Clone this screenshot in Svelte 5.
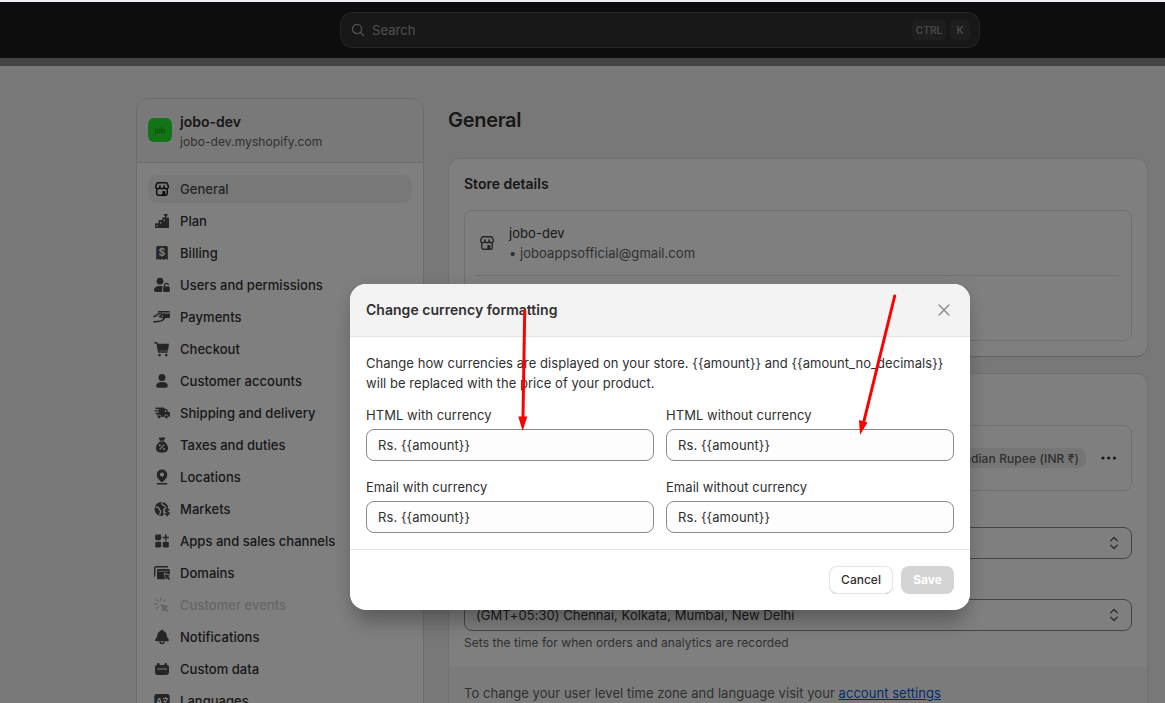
<script>
  const storeIcon = '<path d="M6 3.700h8c.5 0 .9.200 1.100.7l1.100 2.500c.5 1.500-.4 2.900-1.900 2.900-1.200 0-2.100-.8-2.200-1.900-.1 1.100-1 1.900-2.100 1.900s-2-.8-2.100-1.900c-.1 1.100-1 1.900-2.200 1.900-1.500 0-2.400-1.400-1.900-2.900l1.100-2.500c.2-.5.6-.7 1.100-.7z" fill="none" stroke="currentColor" stroke-width="1.400" stroke-linejoin="round"/><path d="M7.900 6.500v1.500M12.100 6.500v1.500" stroke="currentColor" stroke-width="1.200" stroke-linecap="round"/><path d="M4.750 9.500v5.300c0 .9.500 1.450 1.400 1.450h7.700c.9 0 1.400-.550 1.400-1.450V9.500" fill="none" stroke="currentColor" stroke-width="1.400"/><path d="M10.300 16.200v-3.100c0-.6.400-1 1-1h1c.6 0 1 .4 1 1v3.100z"/>';

  const navItems = [
    { label: 'General', active: true, icon: storeIcon },
    { label: 'Plan', icon: '<path d="M3 13.200c0-.6.4-1 1-1h2.600V10c0-.6.4-1 1-1h2.600V7.500c0-.6.4-1 1-1H13V5.300l-1.200-1V3h3.800v1.300l-1.200 1v1.200H16c.6 0 1 .4 1 1V16c0 .6-.4 1-1 1H4c-.6 0-1-.4-1-1z"/><path d="M4.900 14v1.300M8.600 11v1.600M12.200 8.400V10" stroke="#fff" stroke-width="1.200"/>' },
    { label: 'Billing', icon: '<path d="M4.200 4.500C4.200 3.700 4.900 3 5.700 3h8.600c.8 0 1.500.7 1.500 1.500V17l-2-1.300-1.900 1.300-1.900-1.300L8.100 17l-1.900-1.300-2 1.300z"/><text x="10" y="13.200" font-size="10.500" font-weight="600" fill="#fff" text-anchor="middle">$</text>' },
    { label: 'Users and permissions', icon: '<circle cx="8" cy="6.200" r="3.400"/><path d="M2 15c0-2.600 2.700-4 6-4 1.200 0 2.200.1 3 .5-.6.6-.8 1.500-.8 2.500v3H4c-1.200 0-2-.9-2-2z"/><path d="M12.600 12V10.400a1.900 1.900 0 0 1 3.800-.2" fill="none" stroke="currentColor" stroke-width="1.300"/><rect x="11.200" y="11.600" width="6.600" height="5.400" rx="1.200"/>' },
    { label: 'Payments', icon: '<path d="M7 4h9.500c.8 0 1.500.6 1.500 1.400H5.600C5.800 4.600 6.300 4 7 4zM10 6.600h8v2.800c0 1-.7 1.700-1.600 1.700h-5.200z"/><path d="M2 9.500c2-.5 3-1.800 4.400-2.600 1.600-.8 3.400-.5 3.600.4.200 1-1.400 1.200-2.500 2 1.700 1 4 1 4.200 2.400M2 15c2.500-1.500 5 .5 8-1.500 1.100-.7 2.600-1.500 2.600-2.500" fill="none" stroke="currentColor" stroke-width="1.500" stroke-linecap="round"/>' },
    { label: 'Checkout', icon: '<path d="M2.800 3.800h1.500c.6 0 .9.400 1 .9l1.400 8.300h8.500" fill="none" stroke="currentColor" stroke-width="1.500" stroke-linecap="round"/><path d="M5 4.800h12l-.8 5.800c-.1.700-.6 1.200-1.400 1.200H6.200z"/><circle cx="7.600" cy="16.100" r="1.300"/><circle cx="14.200" cy="16.100" r="1.300"/>' },
    { label: 'Customer accounts', icon: '<circle cx="10" cy="6.500" r="3.500"/><path d="M4.200 14.800c0-2.500 2.700-3.700 5.800-3.700s5.800 1.200 5.800 3.700c0 1.300-.8 1.900-1.900 1.900H6.100c-1.100 0-1.900-.6-1.900-1.900z"/>' },
    { label: 'Shipping and delivery', icon: '<path d="M3.500 4.600h7.700c.8 0 1.200.4 1.200 1.200h1.300c.8 0 1.300.3 1.600 1l.7 1.700 1.200.6c.5.300.8.700.8 1.300V13c0 .7-.4 1.100-1.100 1.100H5V11H3.600V9.800h3.200V8.500H2.500V7.300h4.300V6H3.500z"/><circle cx="7.200" cy="13.800" r="1.900" stroke="#fff" stroke-width=".8"/><circle cx="14.300" cy="13.800" r="1.900" stroke="#fff" stroke-width=".8"/><path d="M13 7.200h1l.6 1.700H13z" fill="#fff"/>' },
    { label: 'Taxes and duties', icon: '<path d="M7.500 2.500h5c.6 0 .8.500.5 1L12 5.700H8L7 3.500c-.3-.5 0-1 .5-1zM7.900 6.500h4.200c2.300 1.700 4 4.200 4 6.800 0 2.500-1.700 4.100-4.100 4.100H8c-2.400 0-4.100-1.600-4.100-4.100 0-2.600 1.700-5.100 4-6.800z"/><path d="m7.700 14.300 4.600-4.600" stroke="#fff" stroke-width="1.200"/><circle cx="7.900" cy="10.300" r="1" fill="#fff"/><circle cx="12.100" cy="13.900" r="1" fill="#fff"/>' },
    { label: 'Locations', icon: '<path fill-rule="evenodd" d="M10 2.500a5.200 5.200 0 0 0-5.300 5.200c0 3.200 2.900 5.500 4.400 7.100.5.500 1.300.5 1.800 0 1.500-1.600 4.400-3.900 4.400-7.100A5.200 5.200 0 0 0 10 2.500zm0 7.200a2.100 2.100 0 1 1 0-4.200 2.100 2.100 0 0 1 0 4.200z"/><path d="M5.300 16.700h9.400" stroke="currentColor" stroke-width="1.400" stroke-linecap="round"/>' },
    { label: 'Markets', icon: '<circle cx="9.500" cy="10" r="7"/><path d="M3.600 7.800c2 .1 3.600 1 3.600 2.300 0 1.200 1.600 1.300 1.400 2.600-.1.900-.9 1.500-.9 3.500M10.500 3.400c-1.300 1.200-.6 2.400.8 2.700 1.400.2 1.100 1.700 2.600 1.700" fill="none" stroke="#fff" stroke-width="1.300"/><path d="M11.100 10.500c.6-1.400 2-2 3.200-1.900h3.700v9.500h-6.500z" fill="#fff"/><path d="M17 10.900c-.8-1.100-3.700-1-3.700.5 0 1.600 3.900 1.100 3.900 2.900 0 1.600-3.100 1.700-4.100.3M15.200 8.900v8" fill="none" stroke="currentColor" stroke-width="1.400" stroke-linecap="round"/>' },
    { label: 'Apps and sales channels', icon: '<rect x="3.200" y="3.400" width="6" height="5.800" rx="1.400"/><rect x="3.200" y="10.800" width="6" height="5.800" rx="1.400"/><rect x="10.800" y="10.800" width="6" height="5.800" rx="1.400"/><path d="M13.800 4v5M11.300 6.500h5" stroke="currentColor" stroke-width="1.500" stroke-linecap="round"/>' },
    { label: 'Domains', icon: '<path d="M2.700 13V5c0-.8.5-1.300 1.300-1.300h11.500" fill="none" stroke="currentColor" stroke-width="1.400" stroke-linecap="round"/><path d="M5 7.200C5 6.400 5.500 6 6.300 6h10.200c.8 0 1.300.5 1.300 1.200v4.300l-6.100-1.800 1.500 6.500H6.300c-.8 0-1.300-.5-1.300-1.300z"/><path d="M6.300 8.300h10" stroke="#fff" stroke-width=".6"/><path d="m12.800 10.900 5.500 1.900-2 1 1.800 2.200-1.100 1-2-2-1 1.800z"/>' },
    { label: 'Customer events', disabled: true, icon: '<path d="M9 2.800v2.500M4.500 4.700l1.700 1.700M2.600 9.200h2.500M4.500 13.700l1.700-1.700M13.500 4.700l-1.700 1.700" stroke="currentColor" stroke-width="1.300" stroke-linecap="round"/><path d="m8.300 8.500 8.500 3-3.100 1.600 2.900 3-1.200 1.200-3-2.900-1.400 2.900z"/>' },
    { label: 'Notifications', icon: '<path d="M10 2.700c.8 0 1.300.5 1.400 1.200 2.100.6 3.100 2.200 3.200 4.400.1 2 1.900 2.900 2.200 4.600.1.700-.4 1.300-1.200 1.300H4.400c-.8 0-1.300-.6-1.200-1.300.3-1.700 2.100-2.600 2.200-4.600.1-2.200 1.100-3.800 3.200-4.400.1-.7.6-1.200 1.400-1.200z"/><path d="M8 14.500a2 2 0 0 0 4 0" fill="none" stroke="currentColor" stroke-width="1.500"/>' },
    { label: 'Custom data', icon: '<path d="M5 6V5.300C5 4.500 5.500 4 6.300 4s1.300.5 1.300 1.300V6h4.800v-.7c0-.8.5-1.300 1.300-1.300S15 4.500 15 5.300V6c1.200 0 2 .8 2 2v1.500H3V8c0-1.200.8-2 2-2zM3 10.600h14V13c0 1.900-1 3-2.700 3H5.700C4 16 3 14.900 3 13z"/><path d="M3 9h2v3H3zM15 9h2v3h-2z"/>' },
    { label: 'Languages', icon: '<rect x="2.300" y="3" width="15.400" height="14" rx="2.500"/><text x="3.800" y="13.600" font-size="9.500" font-weight="600" fill="#fff">A</text><path d="M11 7.500h5M13.500 6v1.500M15.200 7.700c-.6 2.600-2 4.500-4 5.600M11.800 9c.8 1.900 2 3.400 3.900 4.300" fill="none" stroke="#fff" stroke-width="1.100"/>' },
  ];

  let fields = $state([
    { label: 'HTML with currency', value: 'Rs. {{amount}}' },
    { label: 'HTML without currency', value: 'Rs. {{amount}}' },
    { label: 'Email with currency', value: 'Rs. {{amount}}' },
    { label: 'Email without currency', value: 'Rs. {{amount}}' },
  ]);
</script>

{#snippet selectIcon()}
  <svg class="select-icon" viewBox="0 0 20 20"><path d="m6.700 7.700 3.300-3.200 3.300 3.200M6.700 12.300l3.300 3.200 3.300-3.200" fill="none" stroke="currentColor" stroke-width="1.500" stroke-linecap="round" stroke-linejoin="round" /></svg>
{/snippet}

<div class="app">
  <div class="screen">
    <header class="topbar">
      <div class="search">
        <svg class="search-icon" viewBox="0 0 16 16"><circle cx="7" cy="7" r="4.600" fill="none" stroke="currentColor" stroke-width="1.300" /><path d="m10.500 10.500 3 3" stroke="currentColor" stroke-width="1.400" stroke-linecap="round" /></svg>
        <span class="search-label">Search</span>
        <kbd>CTRL</kbd>
        <kbd>K</kbd>
      </div>
    </header>

    <div class="page">
      <aside class="sidebar">
        <div class="store">
          <span class="avatar">job</span>
          <div>
            <div class="store-name">jobo-dev</div>
            <div class="store-url">jobo-dev.myshopify.com</div>
          </div>
        </div>
        <nav>
          {#each navItems as item}
            <div class="nav-item" class:active={item.active} class:disabled={item.disabled}>
              <svg class="icon" viewBox="0 0 20 20" fill="currentColor">{@html item.icon}</svg>
              <span>{item.label}</span>
            </div>
          {/each}
        </nav>
      </aside>

      <main>
        <h1>General</h1>

        <section class="card details">
          <h2>Store details</h2>
          <div class="box">
            <div class="contact">
              <svg class="icon" viewBox="0 0 20 20" fill="currentColor">{@html storeIcon}</svg>
              <div>
                <div>jobo-dev</div>
                <div class="muted">• joboappsofficial@gmail.com</div>
              </div>
            </div>
          </div>
        </section>

        <section class="card defaults">
          <h2>Store defaults</h2>
          <div class="box currency">
            <span class="badge">Indian Rupee (INR ₹)</span>
            <svg class="icon" viewBox="0 0 20 20" fill="currentColor"><circle cx="4" cy="10" r="1.600" /><circle cx="9.700" cy="10" r="1.600" /><circle cx="15.400" cy="10" r="1.600" /></svg>
          </div>
          <div class="select-row">
            <span>Unit system</span>
            <div class="select">{@render selectIcon()}</div>
          </div>
          <div class="select-row">
            <span>Time zone</span>
            <div class="select">(GMT+05:30) Chennai, Kolkata, Mumbai, New Delhi{@render selectIcon()}</div>
          </div>
          <p class="help">Sets the time for when orders and analytics are recorded</p>
          <div class="card-footer">To change your user level time zone and language visit your <a href="#account">account settings</a></div>
        </section>
      </main>
    </div>
    <div class="backdrop"></div>
  </div>

  <div class="modal" role="dialog" aria-label="Change currency formatting">
    <div class="modal-header">
      <h2>Change currency formatting</h2>
      <svg class="close" viewBox="0 0 20 20"><path d="m5.100 5.100 9.800 9.800M14.900 5.100l-9.800 9.800" stroke="currentColor" stroke-width="1.400" stroke-linecap="round" /></svg>
    </div>
    <div class="modal-body">
      <p>Change how currencies are displayed on your store. {'{{amount}}'} and {'{{amount_no_decimals}}'} will be replaced with the price of your product.</p>
      <div class="fields">
        {#each fields as field}
          <label>
            <span>{field.label}</span>
            <input type="text" bind:value={field.value} />
          </label>
        {/each}
      </div>
    </div>
    <div class="modal-footer">
      <button class="cancel">Cancel</button>
      <button class="save" disabled>Save</button>
    </div>
  </div>

  <svg class="arrows" viewBox="0 0 1165 703">
    <path d="M524.700 311 523 418M894.700 296 863.500 423" stroke="#f00" stroke-width="3" stroke-linecap="round" />
    <path d="M518.300 416.500h9L522.600 431zM859 420l8.500 2.500L860 435z" fill="#f00" />
  </svg>
</div>

<style>
  :global(body) { margin: 0; overflow: hidden; }
  .app { position: relative; height: 703px; overflow: hidden; box-sizing: border-box; border-top: 2px solid #eef0f6; font: 400 13px/20px Inter, "Liberation Sans", sans-serif; letter-spacing: 0.045px; color: #303030; }
  .app :global(*) { box-sizing: border-box; }
  h1, h2, p { margin: 0; }
  .screen { height: 701px; overflow: hidden; position: relative; background: #f1f1f1; }
  .backdrop { position: absolute; inset: 0; background: rgba(0, 0, 0, 0.5); }
  .icon { width: 20px; height: 20px; flex: none; }

  .topbar { display: flex; padding: 10px 0 10px 340px; height: 64px; background: #1a1a1a; border-bottom: 8px solid #888; }
  .search { display: flex; align-items: center; width: 640px; height: 36px; padding: 0 9px; background: #303030; border: 1px solid #484848; border-radius: 12px; color: #a0a0a0; }
  .search-icon { width: 16px; height: 16px; margin-right: 6px; }
  .search-label { flex: 1; }
  kbd { margin-left: 4px; height: 20px; width: 20px; text-align: center; border-radius: 5px; background: #3d3d3d; font: 600 10px/21px Inter, sans-serif; color: #929292; }
  kbd:first-of-type { width: 34px; }

  .page { display: flex; gap: 24px; padding: 32px 17px 0 136px; }
  .sidebar { width: 288px; height: 700px; flex: none; background: #fff; border: 1px solid #d8d8d8; border-radius: 12px 12px 0 0; overflow: hidden; }
  .store { display: flex; align-items: center; gap: 8px; height: 64px; padding: 0 11px; background: #f3f3f3; border-bottom: 1px solid #dcdcdc; }
  .store-name { padding-top: 4px; font-size: 14px; line-height: 18px; font-weight: 600; letter-spacing: 0; }
  .store-url { padding-top: 1px; font-size: 12px; color: #616161; letter-spacing: 0.08px; }
  .avatar { width: 24px; height: 24px; margin-top: -2px; border-radius: 6px; background: #25e82b; color: #147d17; font-size: 7px; line-height: 25px; text-align: center; }
  nav { display: flex; flex-direction: column; gap: 4px; padding: 12px 11px; }
  .nav-item { display: flex; align-items: center; gap: 8px; height: 28px; padding: 0 4px; border-radius: 8px; font-weight: 500; letter-spacing: 0.035px; }
  .nav-item .icon { color: #4a4a4a; }
  .nav-item.active { background: #f1f1f1; color: #4a4a4a; }
  .nav-item.active .icon { color: #1a1a1a; }
  .nav-item.disabled, .nav-item.disabled .icon { color: #cccccc; }

  main { width: 700px; flex: none; }
  h1 { height: 60px; padding-top: 10px; font-size: 20px; line-height: 24px; font-weight: 600; letter-spacing: -0.3px; }
  h2 { font-size: 14px; line-height: 20px; font-weight: 600; letter-spacing: 0; }
  .card { background: #fff; border: 1px solid #e0e0e0; border-bottom-color: #c8c8c8; border-radius: 12px; padding: 15px; overflow: hidden; }
  .details { height: 199px; margin-bottom: 16px; }
  .box { border: 1px solid #dedede; border-radius: 8px; margin-top: 16px; }
  .details .box { height: 131px; padding: 0 12px 0 11px; }
  .contact { display: flex; align-items: center; gap: 12px; height: 65px; border-bottom: 1px solid #dedede; }
  .contact .icon { margin-left: 1px; color: #4a4a4a; }
  .muted { color: #616161; }
  .defaults { height: 360px; }
  .currency { display: flex; align-items: center; justify-content: flex-end; gap: 13px; height: 66px; padding-right: 12px; }
  .badge { height: 20px; padding: 0 7px 0 8px; border-radius: 8px; background: #ededed; color: #616161; font-size: 12px; line-height: 21px; font-weight: 500; letter-spacing: 0.1px; }
  .select-row { margin-top: 12px; }
  .select-row + .select-row { margin-top: 16px; }
  .select-row span { display: block; margin-bottom: 4px; }
  .select { position: relative; height: 32px; padding: 5px 11px; border: 1px solid #8a8a8a; border-radius: 8px; }
  .select-icon { position: absolute; right: 7px; top: 5px; width: 20px; height: 20px; color: #616161; }
  .help { margin-top: 2px; font-size: 12px; color: #616161; }
  .card-footer { margin: 14px -15px 0; padding: 16px 15px; height: 80px; background: #f7f7f7; color: #616161; }
  .card-footer a { color: #005bd3; }

  .modal { position: absolute; left: 350px; top: 282px; width: 620px; height: 326px; border-radius: 16px; overflow: hidden; background: #fff; box-shadow: 0 20px 20px -8px rgba(26, 26, 26, 0.28), 0 4px 18px rgba(0, 0, 0, 0.12); }
  .modal-header { display: flex; align-items: center; justify-content: space-between; height: 53px; padding: 0 16px; background: #f3f3f3; border-bottom: 1px solid #e3e3e3; }
  .modal-header h2 { letter-spacing: 0.03px; }
  .close { width: 20px; height: 20px; color: #8a8a8a; }
  .modal-body { height: 213px; padding: 16px; border-bottom: 1px solid #e3e3e3; }
  .fields { display: grid; grid-template-columns: 1fr 1fr; gap: 16px 12px; margin-top: 12px; }
  label span { display: block; margin-bottom: 4px; }
  input { display: block; width: 100%; height: 32px; padding: 0 11px; border: 1px solid #8a8a8a; border-radius: 8px; background: #fdfdfd; font: inherit; letter-spacing: 0.08px; color: inherit; }
  .modal-footer { display: flex; justify-content: flex-end; gap: 8px; padding: 16px; }
  button { height: 28px; padding: 0 12px; border: 0; border-radius: 8px; font: 500 12px/16px Inter, sans-serif; }
  .cancel { width: 64px; background: #fff; color: #303030; box-shadow: inset 0 0 0 1px #e3e3e3, inset 0 -1px 0 #b5b5b5; }
  .save { width: 53px; background: #d4d4d4; color: #fff; font-weight: 700; }
  .arrows { position: absolute; left: 0; top: -2px; width: 1165px; height: 703px; pointer-events: none; }
</style>
